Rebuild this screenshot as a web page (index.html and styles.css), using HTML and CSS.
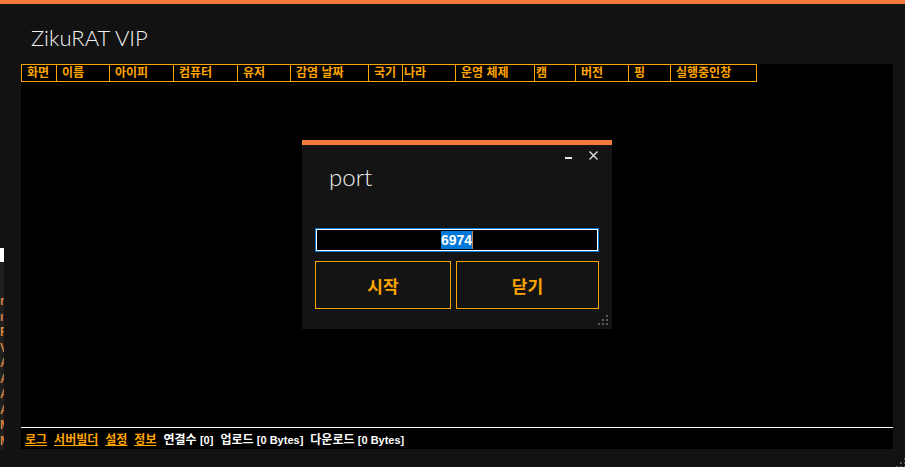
FILE: index.html
```html
<!DOCTYPE html>
<html>
<head>
<meta charset="UTF-8">
<meta name="viewport" content="width=device-width, initial-scale=1.0">
<title>ZikuRAT VIP</title>
<link rel="stylesheet" href="styles.css">
</head>
<body>

<div class="main-window">
    <div class="top-bar"></div>
    <h1 class="app-title">ZikuRAT VIP</h1>

    <div class="client-panel">
        <div class="list-header">
            <div class="col">화면</div>
            <div class="col">이름</div>
            <div class="col">아이피</div>
            <div class="col">컴퓨터</div>
            <div class="col">유저</div>
            <div class="col">감염 날짜</div>
            <div class="col">국기</div>
            <div class="col col-tight">나라</div>
            <div class="col">운영 체제</div>
            <div class="col col-tight">캠</div>
            <div class="col">버전</div>
            <div class="col">핑</div>
            <div class="col">실행중인창</div>
        </div>
        <div class="list-body"></div>
        <div class="status-bar">
            <a href="#" class="link">로그</a>
            <a href="#" class="link">서버빌더</a>
            <a href="#" class="link">설정</a>
            <a href="#" class="link">정보</a>
            <span class="stat">연결수 <span class="count">[0]</span></span>
            <span class="stat">업로드 <span class="count">[0 Bytes]</span></span>
            <span class="stat">다운로드 <span class="count">[0 Bytes]</span></span>
        </div>
    </div>

    <svg class="grip main-grip" width="10" height="10" viewBox="0 0 10 10">
        <rect x="8" y="0" width="2" height="2"/>
        <rect x="4" y="4" width="2" height="2"/><rect x="8" y="4" width="2" height="2"/>
        <rect x="0" y="8" width="2" height="2"/><rect x="4" y="8" width="2" height="2"/><rect x="8" y="8" width="2" height="2"/>
    </svg>
</div>

<!-- window behind, only its edge shows -->
<div class="back-window">
    <div class="back-top"></div>
    <div class="back-list">
        <div>r</div><div>ıl</div><div>R</div><div>V</div><div>A</div>
        <div>A</div><div>A</div><div>A</div><div>M</div><div>M</div>
    </div>
</div>

<div class="port-dialog">
    <div class="dialog-controls">
        <span class="btn-min"></span>
        <svg class="btn-close" width="9" height="9" viewBox="0 0 9 9">
            <path d="M0.5 0.5 L8.5 8.5 M8.5 0.5 L0.5 8.5" stroke="#e6e6e6" stroke-width="1.3" fill="none"/>
        </svg>
    </div>
    <div class="dialog-title">port</div>
    <div class="port-input"><span class="selected">6974</span><span class="caret"></span></div>
    <div class="dialog-buttons">
        <button class="button button-start">시작</button>
        <button class="button button-close">닫기</button>
    </div>
    <svg class="grip dialog-grip" width="10" height="10" viewBox="0 0 10 10">
        <rect x="8" y="0" width="2" height="2"/>
        <rect x="4" y="4" width="2" height="2"/><rect x="8" y="4" width="2" height="2"/>
        <rect x="0" y="8" width="2" height="2"/><rect x="4" y="8" width="2" height="2"/><rect x="8" y="8" width="2" height="2"/>
    </svg>
</div>

</body>
</html>
```

FILE: styles.css
```css
body, html {
    margin: 0;
    padding: 0;
    height: 100%;
    overflow: hidden;
    background-color: #121212;
    font-family: "Liberation Sans", "Noto Sans CJK KR", sans-serif;
}

.main-window {
    position: relative;
    height: 467px;
}

.top-bar {
    height: 4px;
    background-color: #f47b3a;
}

.app-title {
    margin: 0;
    padding: 19px 0 0 31px;
    height: 41px;
    font-family: "Lato", "Noto Sans", sans-serif;
    font-weight: 300;
    font-size: 22px;
    line-height: 30px;
    color: #f2f2f2;
}

.client-panel {
    margin-left: 21px;
    width: 872px;
    height: 385px;
    background-color: #000;
    display: flex;
    flex-direction: column;
}

.list-header {
    display: grid;
    grid-template-columns: 35px 53px 64px 64px 53px 78px 34px 53px 79px 41px 53px 42px 87px;
}

.col {
    box-sizing: border-box;
    height: 18px;
    border-top: 1px solid #ffa500;
    border-bottom: 1px solid #ffa500;
    border-left: 1px solid #ffa500;
    padding-left: 5px;
    color: #ffa500;
    font-weight: bold;
    font-size: 12px;
    line-height: 16px;
    white-space: nowrap;
}

.col:last-child {
    border-right: 1px solid #ffa500;
}

.col-tight {
    padding-left: 1px;
}

.list-body {
    flex: 1;
}

.status-bar {
    box-sizing: border-box;
    height: 22px;
    border-top: 1px solid #fff;
    display: flex;
    align-items: center;
    gap: 7px;
    padding-left: 4px;
    font-size: 12px;
    font-weight: bold;
}

.link {
    color: #ffa500;
    text-decoration: underline;
}

.stat {
    color: #fff;
}

.count {
    font-size: 11px;
}

.grip rect {
    fill: #5a5a5a;
}

.main-grip {
    position: absolute;
    right: -1px;
    bottom: -1px;
}

.back-window {
    position: absolute;
    left: 0;
    top: 248px;
    width: 4px;
    height: 202px;
    overflow: hidden;
    background-color: #1f1f1f;
}

.back-top {
    height: 14px;
    background-color: #fff;
}

.back-list {
    padding-top: 32px;
    font-size: 12px;
    font-weight: bold;
    line-height: 15.5px;
    color: #d9803f;
    white-space: nowrap;
}

.port-dialog {
    position: absolute;
    left: 302px;
    top: 140px;
    width: 310px;
    height: 189px;
    box-sizing: border-box;
    border-top: 5px solid #f47b3a;
    background-color: #141414;
}

.dialog-controls {
    height: 21px;
    display: flex;
    justify-content: flex-end;
    align-items: center;
    gap: 17px;
    padding-right: 14px;
}

.btn-min {
    width: 7px;
    height: 2px;
    margin-top: 5px;
    background-color: #e6e6e6;
}

.dialog-title {
    padding-left: 27px;
    font-family: "Lato", "Noto Sans", sans-serif;
    font-weight: 300;
    font-size: 24px;
    line-height: 22px;
    color: #f2f2f2;
}

.port-input {
    box-sizing: border-box;
    margin: 40px 13px 0 13px;
    height: 24px;
    border: 1px solid #0078d7;
    box-shadow: inset 0 0 0 1px #fff;
    background-color: #000;
    display: flex;
    justify-content: center;
    align-items: center;
}

.selected {
    background-color: #0078d7;
    color: #fff;
    font-weight: bold;
    font-size: 14px;
    line-height: 18px;
}

.caret {
    width: 1px;
    height: 18px;
    background-color: #c8823c;
}

.dialog-buttons {
    display: flex;
    gap: 5px;
    margin: 9px 13px 0 13px;
}

.button {
    box-sizing: border-box;
    height: 48px;
    border: 1px solid #ffa500;
    background-color: transparent;
    color: #ffa500;
    font-family: "Liberation Sans", "Noto Sans CJK KR", sans-serif;
    font-weight: bold;
    font-size: 17px;
    padding: 0;
}

.button-start {
    width: 136px;
}

.button-close {
    flex: 1;
}

.dialog-grip {
    position: absolute;
    right: 4px;
    bottom: 4px;
}
```
